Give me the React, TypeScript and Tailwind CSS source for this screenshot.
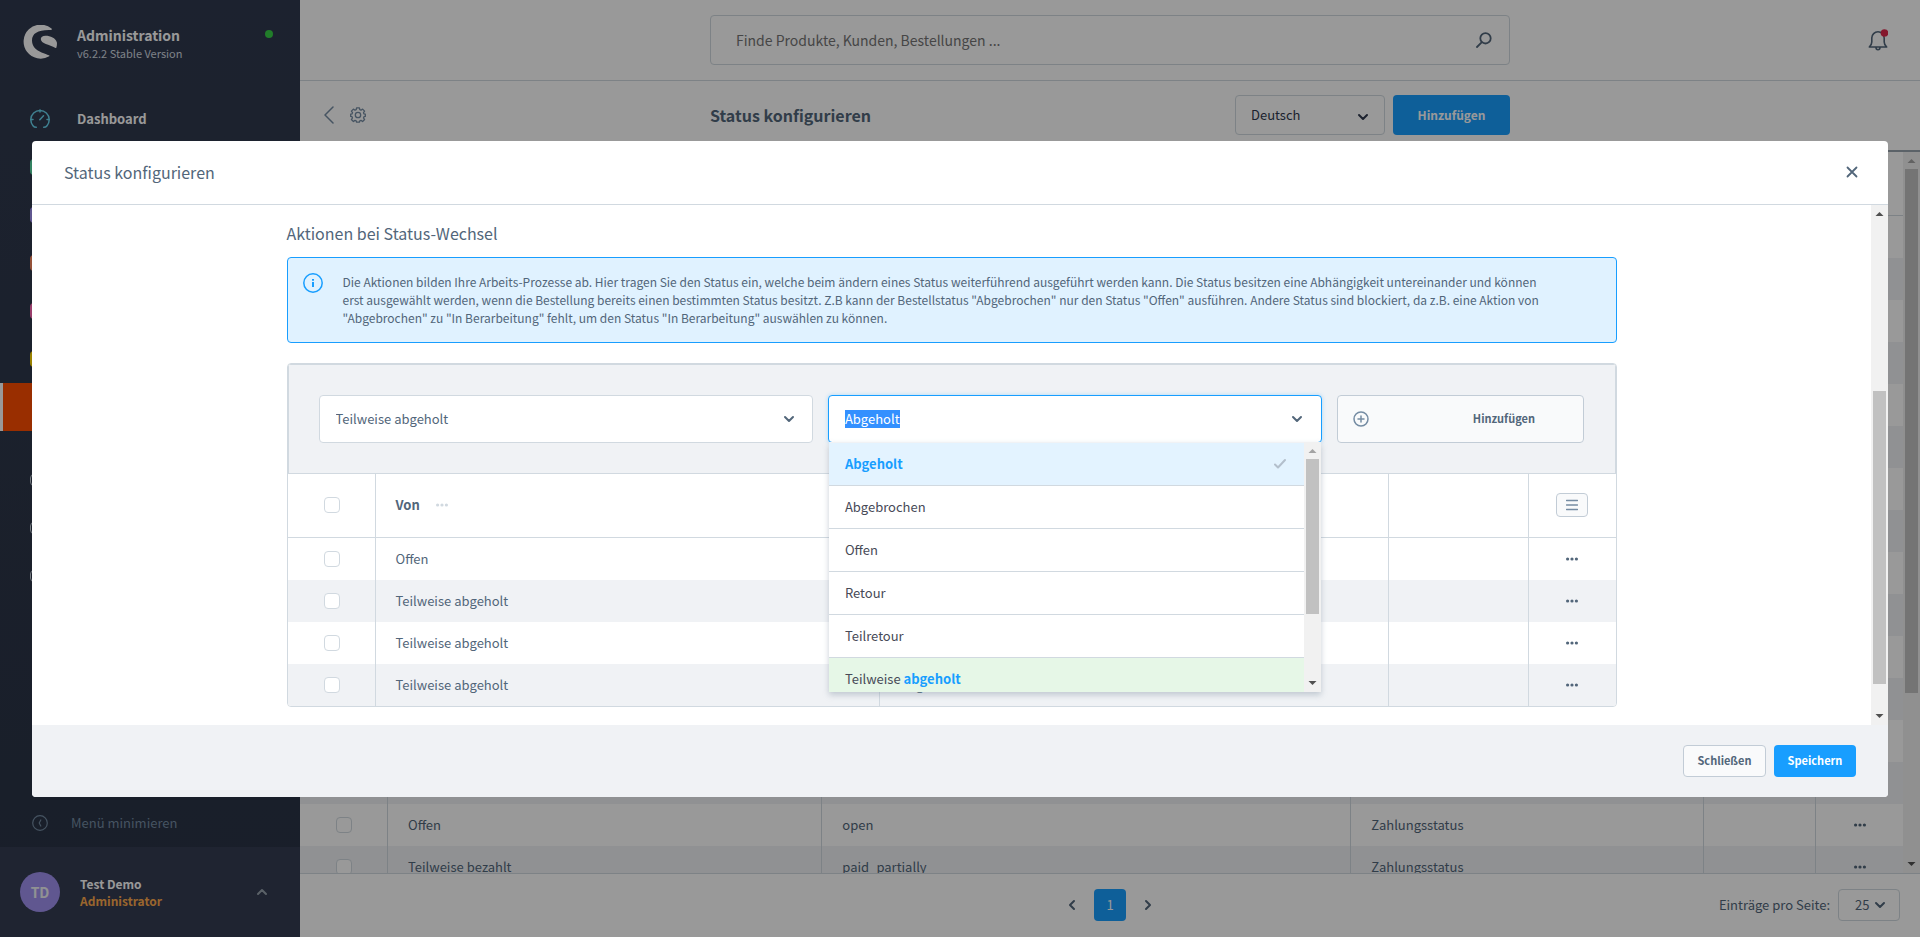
import React, { useEffect, useRef } from 'react';

interface StateRow {
  name: string;
  technical: string;
  type: string;
}

interface ActionRow {
  from: string;
  to: string;
}

const states: StateRow[] = [
  { name: 'Offen', technical: 'open', type: 'Bestellstatus' },
  { name: 'In Bearbeitung', technical: 'in_progress', type: 'Bestellstatus' },
  { name: 'Abgeschlossen', technical: 'completed', type: 'Bestellstatus' },
  { name: 'Abgebrochen', technical: 'cancelled', type: 'Bestellstatus' },
  { name: 'Offen', technical: 'open', type: 'Lieferstatus' },
  { name: 'Versandt', technical: 'shipped', type: 'Lieferstatus' },
  { name: 'Teilweise versandt', technical: 'shipped_partially', type: 'Lieferstatus' },
  { name: 'Retour', technical: 'returned', type: 'Lieferstatus' },
  { name: 'Teilretour', technical: 'returned_partially', type: 'Lieferstatus' },
  { name: 'Abgebrochen', technical: 'cancelled', type: 'Lieferstatus' },
  { name: 'Abgeholt', technical: 'picked_up', type: 'Lieferstatus' },
  { name: 'Teilweise abgeholt', technical: 'picked_up_partially', type: 'Lieferstatus' },
  { name: 'Bezahlt', technical: 'paid', type: 'Zahlungsstatus' },
  { name: 'Erinnert', technical: 'reminded', type: 'Zahlungsstatus' },
  { name: 'Offen', technical: 'open', type: 'Zahlungsstatus' },
  { name: 'Teilweise bezahlt', technical: 'paid_partially', type: 'Zahlungsstatus' },
];

const actions: ActionRow[] = [
  { from: 'Offen', to: 'Teilweise abgeholt' },
  { from: 'Teilweise abgeholt', to: 'Retour' },
  { from: 'Teilweise abgeholt', to: 'Teilretour' },
  { from: 'Teilweise abgeholt', to: 'Abgeholt' },
];

const stroke = { fill: 'none', stroke: 'currentColor', strokeLinecap: 'round', strokeLinejoin: 'round' } as const;

const Chevron: React.FC<{ className?: string }> = ({ className = '' }) => (
  <svg viewBox="0 0 12 12" className={className} {...stroke} strokeWidth={2}>
    <path d="M2 4l4 4 4-4" />
  </svg>
);

const Dots: React.FC<{ className?: string }> = ({ className = '' }) => (
  <svg viewBox="0 0 12 12" className={className} fill="currentColor">
    <circle cx="1.6" cy="6" r="1.6" />
    <circle cx="6" cy="6" r="1.6" />
    <circle cx="10.4" cy="6" r="1.6" />
  </svg>
);

const ShopwareLogo = () => (
  <svg viewBox="0 0 34 34" className="h-[34px] w-[34px]" fill="#fff">
    <path d="M28.5 3.6A17 17 0 1 0 26.2 31.3c.4-.3.3-.8-.2-1C21.5 28.3 9 26 9 15.5 9 8 15.5 4.5 28 5c.9 0 1.2-.9.5-1.4z" />
    <path d="M33.9 17.5C32.5 13 27.5 10.8 22.5 10.8c-3 0-4.7 1.3-4.7 3.3 0 4.7 8.5 5.4 14.7 8.9.4.2.7.1.8-.3.6-1.7.8-3.6.6-5.2z" />
  </svg>
);

const GaugeIcon = () => (
  <svg viewBox="0 0 20 20" className="h-5 w-5 text-[#6ad6f0]" {...stroke} strokeWidth={1.5}>
    <path d="M6.3 18.3c-1.8 0-2.6-.6-3.3-1.6A9.2 9.2 0 1 1 17 16.7c-.7 1-1.5 1.6-3.3 1.6" />
    <path d="M10 1v2M1 10.5h2M17 10.500h2M9.800 10.800l3.700-4" />
  </svg>
);

const CogIcon = () => (
  <svg viewBox="0 0 16 16" className="h-4 w-4" {...stroke} strokeWidth={1.3}>
    <path d="M6.600.8h2.800l.4 1.900 1.200.5 1.600-1.100 2 2-1.100 1.600.5 1.200 1.300.3v2.200l-1.300.3-.5 1.200 1.100 1.600-2 2-1.600-1.100-1.200.5-.4 1.300H6.600l-.4-1.300-1.200-.5-1.600 1.100-2-2 1.100-1.600-.5-1.200-1.300-.3V7.200L2 6.900l.5-1.200L1.400 4.100l2-2L5 3.200l1.200-.5z" />
    <circle cx="8" cy="8" r="2.700" />
  </svg>
);

const CheckBox: React.FC<{ label: string }> = ({ label }) => (
  <input
    type="checkbox"
    aria-label={label}
    className="ml-9 block h-4 w-4 appearance-none rounded border border-[#d1d9e0] bg-white"
  />
);

const Scrollbar: React.FC<{ thumb: string; upMuted?: boolean }> = ({ thumb, upMuted }) => (
  <div aria-hidden="true" className="flex w-[17px] shrink-0 flex-col bg-[#f1f1f1]">
    <svg viewBox="0 0 17 17" className="h-[17px] w-[17px] shrink-0" fill={upMuted ? '#a3a3a3' : '#505050'}>
      <path d="M4.500 11h8l-4-4z" />
    </svg>
    <div className="flex flex-1 flex-col px-[2px]">
      <div className={`bg-[#c1c1c1] ${thumb}`} />
    </div>
    <svg viewBox="0 0 17 17" className="h-[17px] w-[17px] shrink-0" fill="#505050">
      <path d="M4.500 6h8l-4 4z" />
    </svg>
  </div>
);

const ActionsHead = () => (
  <th>
    <button
      aria-label="Spalten"
      className="mx-auto flex h-6 w-8 items-center justify-center rounded border border-[#c2ccd6] bg-[#f9fafb] text-[#758ca3]"
    >
      <svg viewBox="0 0 12 12" className="h-3 w-3" {...stroke} strokeWidth={1.4}>
        <path d="M.5 1.500h11M.5 6h11M.5 10.500h11" />
      </svg>
    </button>
  </th>
);

const RowMenu = () => (
  <td>
    <button aria-label="Aktionen" className="mx-auto block">
      <Dots className="h-3 w-3" />
    </button>
  </td>
);

const tableClass =
  'w-full table-fixed border-separate border-spacing-0 text-left text-[13px] leading-[18px] text-[#52667a] [&_td]:h-[42px] [&_th]:h-16 [&_tr>*]:border-[#d1d9e0] [&_tr>*:not(:last-child)]:border-r [&_th]:border-b [&_tbody_tr:nth-child(even)]:bg-[#f0f2f5]';

const navPeek = [
  'border-[#57d9a3]',
  'border-[#a092f0]',
  'border-[#f88962]',
  'border-[#ff68b4]',
  'border-[#ffd700]',
];

const Sidebar = () => (
  <aside className="flex w-[300px] shrink-0 flex-col bg-linear-to-b from-[#303a4f] to-[#2a3345] text-white">
    <div className="flex h-[95px] items-start px-[23px] pt-[25px]">
      <ShopwareLogo />
      <div className="ml-5 flex-1">
        <div className="text-sm leading-5 font-bold">Administration</div>
        <div className="text-[11px] leading-4 text-[#d1d9e0]">v6.2.2 Stable Version</div>
      </div>
      <span className="mt-[5px] mr-1 h-2 w-2 rounded-full bg-[#37d046]" />
    </div>
    <nav className="flex-1">
      <a href="#dashboard" className="flex h-12 items-center gap-[27px] pl-[30px] text-[13px] font-bold">
        <GaugeIcon />
        Dashboard
      </a>
      {navPeek.map((color) => (
        <div key={color} className="flex h-12 items-center pl-[30px]">
          <span className={`h-4 w-5 rounded-sm border-2 ${color}`} />
        </div>
      ))}
      <div className="mb-[25px] h-12 border-l-[3px] border-white bg-[#ff4d00]" />
      {[0, 1, 2].map((i) => (
        <div key={i} className="flex h-12 items-center pl-[30px]">
          <span className="h-3 w-5 rounded-sm border border-[#c2ccd6]" />
        </div>
      ))}
    </nav>
    <button className="flex h-12 items-center gap-[23px] pl-8 text-[13px] text-[#758ca3]">
      <svg viewBox="0 0 16 16" className="h-4 w-4" {...stroke} strokeWidth={1.2}>
        <circle cx="8" cy="8" r="7.300" />
        <path d="M8.800 5L7.200 8l1.600 3" />
      </svg>
      Menü minimieren
    </button>
    <div className="flex h-[90px] items-center bg-[#343c52] pr-8 pl-5">
      <span className="flex h-10 w-10 items-center justify-center rounded-full bg-[#a092f0] text-sm font-bold text-[#f0f2f5]">
        TD
      </span>
      <div className="ml-5 flex-1 text-xs leading-[17px] font-bold">
        <div>Test Demo</div>
        <div className="text-[#ffab4d]">Administrator</div>
      </div>
      <Chevron className="h-3 w-3 rotate-180 text-[#98a3ae]" />
    </div>
  </aside>
);

const TopBar = () => (
  <header className="grid h-[81px] shrink-0 grid-cols-[1fr_800px_1fr] items-center border-b border-[#d1d9e0]">
    <div />
    <label className="flex h-[50px] items-center rounded border border-[#d1d9e0] pr-[17px] pl-[25px]">
      <input
        type="text"
        aria-label="Suche"
        placeholder="Finde Produkte, Kunden, Bestellungen ..."
        className="flex-1 bg-transparent text-sm placeholder:text-[#757575] focus:outline-none"
      />
      <svg viewBox="0 0 16 16" className="h-4 w-4 text-[#52667a]" {...stroke} strokeWidth={1.8}>
        <circle cx="9.500" cy="6.300" r="5.200" />
        <path d="M5.600 10.400L1 15" />
      </svg>
    </label>
    <div className="flex justify-end pr-8">
      <button aria-label="Benachrichtigungen" className="text-[#52667a]">
        <svg viewBox="0 0 20 22" className="h-[22px] w-5" {...stroke} strokeWidth={1.6}>
          <path d="M1.300 18c1.700-1.500 2.500-3 2.500-5V9a6.200 6.200 0 0 1 12.400 0v4c0 2 .8 3.500 2.500 5zM8 18.500c0 3 4 3 4 0" />
          <circle cx="16.500" cy="4" r="3.800" fill="#de294c" stroke="none" />
        </svg>
      </button>
    </div>
  </header>
);

const PageHead = () => (
  <div className="grid h-[71px] shrink-0 grid-cols-[1fr_800px_1fr] items-center border-b-2 border-[#98a3ae] pb-0.5 text-[#52667a]">
    <div className="flex items-center gap-4 pl-6 text-[#758ca3]">
      <svg viewBox="0 0 10 18" className="h-[18px] w-[10px]" {...stroke} strokeWidth={1.5}>
        <path d="M9 1L1 9l8 8" />
      </svg>
      <CogIcon />
    </div>
    <div className="flex items-center gap-2">
      <h1 className="flex-1 text-base font-bold">Status konfigurieren</h1>
      <div className="relative">
        <select
          aria-label="Sprache"
          className="block h-10 w-[150px] appearance-none rounded border border-[#d1d9e0] bg-white px-[15px] text-[13px] text-[#303a4f]"
        >
          <option>Deutsch</option>
        </select>
        <Chevron className="pointer-events-none absolute top-4 right-4 h-3 w-3 text-[#303a4f]" />
      </div>
      <button className="h-10 w-[117px] rounded bg-[#189eff] text-xs font-bold text-white">Hinzufügen</button>
    </div>
    <div />
  </div>
);

const StateTable = () => (
  <div className="flex min-h-0 flex-1">
    <div className="min-w-0 flex-1 overflow-hidden">
      <table className={tableClass}>
        <colgroup>
          <col className="w-[88px]" />
          <col />
          <col className="w-[33%]" />
          <col className="w-[22%]" />
          <col className="w-28" />
          <col className="w-[87px]" />
        </colgroup>
        <thead>
          <tr>
            <th>
              <CheckBox label="Alle auswählen" />
            </th>
            <th className="px-5">Name</th>
            <th className="px-5">Technischer Name</th>
            <th className="px-5">Typ</th>
            <th />
            <ActionsHead />
          </tr>
        </thead>
        <tbody>
          {states.map((row, i) => (
            <tr key={i}>
              <td>
                <CheckBox label={row.name} />
              </td>
              <td className="px-5">{row.name}</td>
              <td className="px-5">{row.technical}</td>
              <td className="px-5">{row.type}</td>
              <td />
              <RowMenu />
            </tr>
          ))}
        </tbody>
      </table>
    </div>
    <Scrollbar thumb="h-[524px]" upMuted />
  </div>
);

const Pagination = () => (
  <footer className="grid h-16 shrink-0 grid-cols-[1fr_auto_1fr] items-center border-t border-[#d1d9e0] pb-0.5 text-[13px] text-[#52667a]">
    <div />
    <div className="flex items-center gap-4">
      <button aria-label="Zurück">
        <Chevron className="h-3 w-3 rotate-90" />
      </button>
      <button className="h-8 w-8 rounded bg-[#189eff] text-white">1</button>
      <button aria-label="Weiter">
        <Chevron className="h-3 w-3 -rotate-90" />
      </button>
    </div>
    <div className="flex items-center justify-end gap-2 pr-5">
      <label htmlFor="per-page">Einträge pro Seite:</label>
      <div className="relative">
        <select id="per-page" className="block h-8 w-[62px] appearance-none rounded border border-[#d1d9e0] bg-white pl-4">
          <option>25</option>
        </select>
        <Chevron className="pointer-events-none absolute top-[10px] right-[14px] h-3 w-3" />
      </div>
    </div>
  </footer>
);

const optionClass = 'flex h-[43px] items-center justify-between border-b border-[#d1d9e0] px-4';

const TargetSelect = () => {
  const inputRef = useRef<HTMLInputElement>(null);

  useEffect(() => {
    inputRef.current?.focus();
    inputRef.current?.select();
  }, []);

  return (
    <div className="relative">
      <div className="flex h-12 items-center rounded border border-[#189eff] bg-white pr-[18px] pl-4 shadow-[0_0_4px_rgba(24,158,255,0.3)]">
        <input
          ref={inputRef}
          type="text"
          role="combobox"
          aria-label="Zu"
          aria-expanded="true"
          aria-controls="target-options"
          defaultValue="Abgeholt"
          className="min-w-0 flex-1 bg-transparent text-[13px] leading-[18px] text-[#52667a] selection:bg-[#3390ff] selection:text-white focus:outline-none"
        />
        <Chevron className="h-3 w-3" />
      </div>
      <div className="absolute inset-x-px top-[47px] z-10 flex h-[250px] bg-white shadow-[0_3px_6px_rgba(120,138,155,0.4)]">
        <ul
          id="target-options"
          role="listbox"
          aria-label="Zu"
          className="min-w-0 flex-1 overflow-hidden border-t border-[#f0f2f5] text-[13px] leading-[18px] text-[#474a57]"
        >
          <li role="option" aria-selected="true" className={`${optionClass} bg-[#e3f3ff] font-bold text-[#189eff]`}>
            Abgeholt
            <svg viewBox="0 0 12 12" className="mr-0.5 h-3 w-3 text-[#b3bfcc]" {...stroke} strokeWidth={2}>
              <path d="M1 6.500L4 9.500l7-7.500" />
            </svg>
          </li>
          {['Abgebrochen', 'Offen', 'Retour', 'Teilretour'].map((name) => (
            <li key={name} role="option" aria-selected="false" className={optionClass}>
              {name}
            </li>
          ))}
          <li role="option" aria-selected="false" className={`${optionClass} bg-[#e6f7e7]`}>
            <span>
              Teilweise <b className="text-[#189eff]">abgeholt</b>
            </span>
          </li>
        </ul>
        <Scrollbar thumb="h-[155px]" upMuted />
      </div>
    </div>
  );
};

const ActionsCard = () => (
  <div className="mt-5 overflow-clip rounded border border-[#d1d9e0]">
    <div className="grid grid-cols-[2fr_2fr_1fr] gap-[15px] border border-[#d1d9e0] bg-[#f0f2f5] p-[30px]">
      <div className="relative">
        <select
          aria-label="Von"
          className="h-12 w-full appearance-none rounded border border-[#d1d9e0] bg-white px-4 text-[13px] leading-[18px]"
        >
          <option>Teilweise abgeholt</option>
        </select>
        <Chevron className="pointer-events-none absolute top-[18px] right-[18px] h-3 w-3" />
      </div>
      <TargetSelect />
      <button className="flex h-12 items-center rounded border border-[#c2ccd6] bg-[#f9fafb] px-[15px] text-left text-[11px] font-bold">
        <svg viewBox="0 0 16 16" className="h-4 w-4 text-[#758ca3]" {...stroke} strokeWidth={1.5}>
          <circle cx="8" cy="8" r="7" />
          <path d="M8 5v6M5 8h6" />
        </svg>
        <span className="flex-1 pl-[70px] text-center">Hinzufügen</span>
      </button>
    </div>
    <table className={tableClass}>
      <colgroup>
        <col className="w-[88px]" />
        <col className="w-[38%]" />
        <col />
        <col className="w-[140px]" />
        <col className="w-[87px]" />
      </colgroup>
      <thead>
        <tr>
          <th>
            <CheckBox label="Alle auswählen" />
          </th>
          <th className="px-5">
            <span className="flex items-center gap-4">
              Von
              <Dots className="h-3 w-3 text-[#d1d9e0]" />
            </span>
          </th>
          <th className="px-5">Zu</th>
          <th />
          <ActionsHead />
        </tr>
      </thead>
      <tbody>
        {actions.map((row, i) => (
          <tr key={i}>
            <td>
              <CheckBox label={`${row.from} zu ${row.to}`} />
            </td>
            <td className="px-5">{row.from}</td>
            <td className="px-5">{row.to}</td>
            <td />
            <RowMenu />
          </tr>
        ))}
      </tbody>
    </table>
  </div>
);

const Modal = () => (
  <div
    role="dialog"
    aria-labelledby="modal-title"
    className="flex h-[656px] w-full flex-col overflow-hidden rounded bg-white text-[#52667a]"
  >
    <div className="flex h-16 shrink-0 items-center justify-between border-b border-[#d1d9e0] px-8">
      <h2 id="modal-title" className="text-base">
        Status konfigurieren
      </h2>
      <button aria-label="Schließen" className="mr-[-2px]">
        <svg viewBox="0 0 12 12" className="h-3 w-3" {...stroke} strokeWidth={1.8}>
          <path d="M1.500 1.500l9 9M10.500 1.500l-9 9" />
        </svg>
      </button>
    </div>
    <div className="flex min-h-0 flex-1">
      <div className="flex flex-1 justify-center overflow-hidden">
        <div className="w-full max-w-[1330px] pt-4">
          <h3 className="text-base leading-6">Aktionen bei Status-Wechsel</h3>
          <div className="mt-3 flex gap-5 rounded border border-[#189eff] bg-[#e0f2ff] p-[15px]">
            <svg viewBox="0 0 20 20" className="h-5 w-5 shrink-0 text-[#189eff]" {...stroke} strokeWidth={1.5}>
              <circle cx="10" cy="10" r="9.200" />
              <path d="M10 9v5M10 6v1.700" strokeWidth={2} strokeLinecap="butt" />
            </svg>
            <p className="max-w-[1210px] text-xs leading-[18px]">
              Die Aktionen bilden Ihre Arbeits-Prozesse ab. Hier tragen Sie den Status ein, welche beim ändern eines
              Status weiterführend ausgeführt werden kann. Die Status besitzen eine Abhängigkeit untereinander und
              können erst ausgewählt werden, wenn die Bestellung bereits einen bestimmten Status besitzt. Z.B kann der
              Bestellstatus "Abgebrochen" nur den Status "Offen" ausführen. Andere Status sind blockiert, da z.B. eine
              Aktion von "Abgebrochen" zu "In Berarbeitung" fehlt, um den Status "In Berarbeitung" auswählen zu können.
            </p>
          </div>
          <ActionsCard />
        </div>
      </div>
      <Scrollbar thumb="mt-[169px] h-[293px]" />
    </div>
    <div className="flex h-[72px] shrink-0 items-center justify-end gap-2 bg-[#f0f2f5] px-8 text-[11px] font-bold">
      <button className="h-8 w-[83px] rounded border border-[#c2ccd6] bg-[#f9fafb]">Schließen</button>
      <button className="h-8 w-[82px] rounded bg-[#189eff] text-white">Speichern</button>
    </div>
  </div>
);

const App: React.FC = () => (
  <div className="relative flex h-screen overflow-hidden bg-white font-['Source_Sans_Pro','Noto_Sans_CJK_SC',sans-serif]">
    <Sidebar />
    <main className="flex min-w-0 flex-1 flex-col">
      <TopBar />
      <PageHead />
      <StateTable />
      <Pagination />
    </main>
    <div className="absolute inset-0 z-20 flex items-center bg-black/40 px-8">
      <Modal />
    </div>
  </div>
);

export default App;
